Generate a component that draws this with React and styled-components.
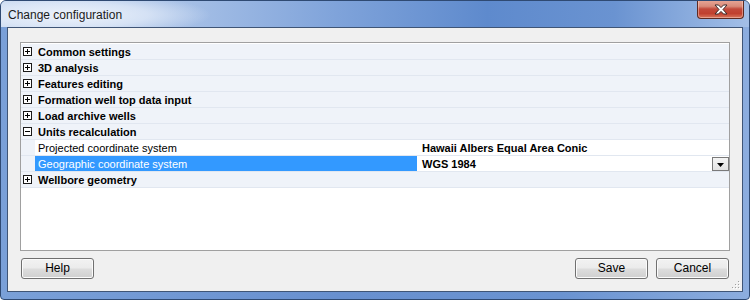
import React from "react";
import styled, { createGlobalStyle } from "styled-components";

const GlobalStyle = createGlobalStyle`
  html, body { margin: 0; padding: 0; background: #ffffff; }
  * { box-sizing: border-box; }
`;

const Window = styled.div`
  width: 750px;
  height: 300px;
  display: flex;
  flex-direction: column;
  border: 1px solid #2f4a73;
  border-radius: 6px 6px 4px 4px;
  background: linear-gradient(to right, #7aa0d8 0%, #6890cf 45%, #6a93d1 75%, #8cadde 100%);
  overflow: hidden;
  font-family: "Liberation Sans", Arial, sans-serif;
`;

const TitleBar = styled.div`
  height: 26px;
  flex: none;
  display: flex;
  align-items: flex-start;
  padding: 0 5px 0 7px;
  background:
    radial-gradient(ellipse 140px 22px at 70px 14px, rgba(240,245,252,0.95) 0%, rgba(230,238,250,0.7) 55%, rgba(230,238,250,0) 100%),
    linear-gradient(to right, #c2d4ee 0%, #a5bfe6 25%, #7fa3da 45%, #5e8acd 65%, #6a93d1 82%, #a3bfe7 100%);
`;

const Title = styled.span`
  font-size: 12px;
  line-height: 28px;
  color: #1b1b1b;
  flex: 1;
`;

const CloseButton = styled.div`
  width: 47px;
  height: 19px;
  margin-top: -1px;
  border: 1px solid #5e2a22;
  border-top: none;
  border-radius: 0 0 4px 4px;
  background: linear-gradient(#e8a898 0%, #d98a79 35%, #c2493a 50%, #c0402f 75%, #d8765c 100%);
  box-shadow: inset 0 0 0 1px rgba(255,220,210,0.45);
  display: flex;
  align-items: center;
  justify-content: center;
`;

const Client = styled.div`
  flex: 1;
  position: relative;
  margin: 0 6px 7px 6px;
  border: 1px solid #3f5576;
  background: #f0f0f0;
  display: flex;
  flex-direction: column;
  padding: 14px 12px 12px 12px;
`;

const Grid = styled.div`
  height: 209px;
  flex: none;
  border: 1px solid #a0a0a0;
  padding-top: 1px;
  background: #ffffff;
  display: flex;
  flex-direction: column;
  font-size: 11px;
  color: #000;
`;

const CategoryRow = styled.div`
  height: 16px;
  display: flex;
  align-items: center;
  background: #eff3f9;
  border-bottom: 1px solid #e1e7f0;
  font-weight: bold;
`;

const Expander = styled.svg`
  width: 9px;
  height: 9px;
  margin: 0 6px 0 2px;
  flex: none;
`;

const PropRow = styled.div`
  height: 16px;
  display: flex;
  border-bottom: 1px solid #e1e7f0;
`;

const Margin = styled.div`
  width: 14px;
  flex: none;
  background: #eff3f9;
`;

const LabelCell = styled.div`
  width: 382px;
  flex: none;
  padding-left: 3px;
  display: flex;
  align-items: center;
  background: ${(p) => (p.$selected ? "#3399ff" : "#ffffff")};
  color: ${(p) => (p.$selected ? "#ffffff" : "#000000")};
  white-space: nowrap;
`;

const ValueCell = styled.div`
  flex: 1;
  display: flex;
  align-items: center;
  padding-left: 5px;
  background: #ffffff;
  font-weight: bold;
  white-space: nowrap;
`;

const ValueText = styled.span`
  flex: 1;
`;

const DropButton = styled.div`
  width: 17px;
  height: 14px;
  align-self: flex-start;
  margin-top: 1px;
  border: 1px solid #7a7a7a;
  background: linear-gradient(#f4f4f4, #e2e2e2);
  display: flex;
  align-items: flex-end;
  justify-content: center;
  padding-bottom: 3px;
`;

const Footer = styled.div`
  display: flex;
  gap: 8px;
  margin-top: 7px;
  padding: 0 1px;
`;

const Spacer = styled.div`
  flex: 1;
`;

const Button = styled.button`
  width: 73px;
  height: 21px;
  border: 1px solid #707070;
  border-radius: 3px;
  background: linear-gradient(#f2f2f2 0%, #ebebeb 48%, #dddddd 52%, #cfcfcf 100%);
  box-shadow: inset 0 0 0 1px #fbfbfb;
  font-family: "Liberation Sans", Arial, sans-serif;
  font-size: 12px;
  color: #000;
  padding: 0;
  line-height: 19px;
`;

const Grip = styled.svg`
  position: absolute;
  right: 1px;
  bottom: 1px;
  width: 10px;
  height: 10px;
`;

const categories = [
  "Common settings",
  "3D analysis",
  "Features editing",
  "Formation well top data input",
  "Load archive wells",
];

function Box({ open }) {
  return (
    <Expander viewBox="0 0 9 9">
      <rect x="0.5" y="0.5" width="8" height="8" fill="#ffffff" stroke="#1a1a1a" />
      <line x1="2" y1="4.5" x2="7" y2="4.5" stroke="#000" />
      {!open && <line x1="4.5" y1="2" x2="4.5" y2="7" stroke="#000" />}
    </Expander>
  );
}

function Category({ name, open }) {
  return (
    <CategoryRow>
      <Box open={open} />
      <span>{name}</span>
    </CategoryRow>
  );
}

export default function App() {
  return (
    <>
      <GlobalStyle />
      <Window>
        <TitleBar>
          <Title>Change configuration</Title>
          <CloseButton>
            <svg width="14" height="11" viewBox="0 0 14 11">
              <path
                d="M1 1 H4.5 L7 3.6 L9.5 1 H13 L9 5.5 L13 10 H9.5 L7 7.4 L4.5 10 H1 L5 5.5 Z"
                fill="#ffffff"
                stroke="#3b2a2a"
                strokeWidth="1"
                strokeLinejoin="round"
              />
            </svg>
          </CloseButton>
        </TitleBar>
        <Client>
          <Grid>
            {categories.map((c) => (
              <Category key={c} name={c} />
            ))}
            <Category name="Units recalculation" open />
            <PropRow>
              <Margin />
              <LabelCell>Projected coordinate system</LabelCell>
              <ValueCell>
                <ValueText>Hawaii Albers Equal Area Conic</ValueText>
              </ValueCell>
            </PropRow>
            <PropRow>
              <Margin />
              <LabelCell $selected>Geographic coordinate system</LabelCell>
              <ValueCell>
                <ValueText>WGS 1984</ValueText>
                <DropButton>
                  <svg width="7" height="4" viewBox="0 0 7 4">
                    <path d="M0 0 H7 L3.5 4 Z" fill="#000" />
                  </svg>
                </DropButton>
              </ValueCell>
            </PropRow>
            <Category name="Wellbore geometry" />
          </Grid>
          <Footer>
            <Button>Help</Button>
            <Spacer />
            <Button>Save</Button>
            <Button>Cancel</Button>
          </Footer>
          <Grip viewBox="0 0 10 10">
            {[
              [8, 2], [8, 5], [5, 5], [8, 8], [5, 8], [2, 8],
            ].map(([x, y]) => (
              <g key={`${x}-${y}`}>
                <rect x={x} y={y} width="1" height="1" fill="#ffffff" />
                <rect x={x - 1} y={y - 1} width="1" height="1" fill="#a0a0a0" />
              </g>
            ))}
          </Grip>
        </Client>
      </Window>
    </>
  );
}
